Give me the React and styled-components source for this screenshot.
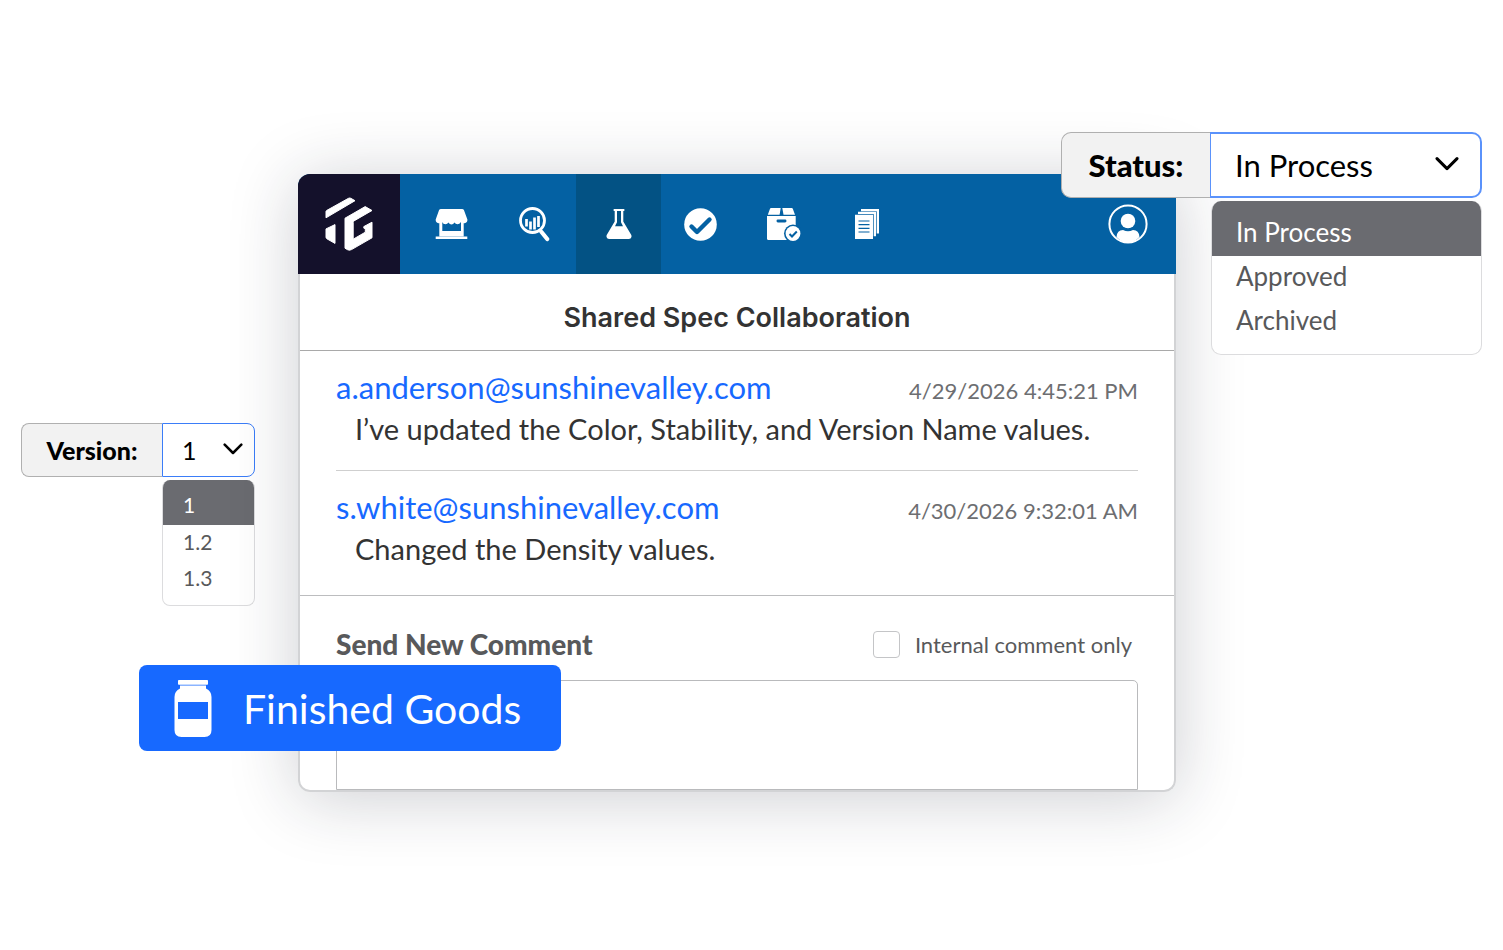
import { useState } from "react";
import styled, { createGlobalStyle } from "styled-components";

const comments = [
    {
        email: "a.anderson@sunshinevalley.com",
        date: "4/29/2026 4:45:21 PM",
        text: "I’ve updated the Color, Stability, and Version Name values.",
    },
    {
        email: "s.white@sunshinevalley.com",
        date: "4/30/2026 9:32:01 AM",
        text: "Changed the Density values.",
    },
];

const LogoIcon = () => (
    <svg width="50" height="56" viewBox="0 0 50 56" fill="#fff" stroke="#fff" strokeWidth="1" strokeLinejoin="round" aria-hidden="true">
        <path d="M2 15.600Q2 14.900 2.600 14.500L24.500 2.300Q25.700 1.700 26.800 2.300L31 4.700 2 21.800Z" />
        <path d="M2 32.900 11 28.600V47.400L2.900 42.800Q2 42.200 2 41.200Z" />
        <path d="M21 22.200 41.200 10.600 48 14.500 30 24.900Q29.200 25.500 29.200 26.500V43.200L41.300 36.200V33.500L39.800 32V30.600L48 26.200V41.800L27.500 53.600Q25.500 54.700 23.500 53.700L21 52.200Z" />
    </svg>
);

const ShopIcon = () => (
    <svg width="33" height="30" viewBox="0 0 33 30" fill="#fff" aria-hidden="true">
        <path d="M6 0H27Q28.500 0 29 1.300L32.400 10.500Q32.600 13.800 29.500 14.200 27 14.400 26 13 24.500 15.300 22.500 15.300 20.500 15.300 19.500 13.600 18.200 15.500 16.500 15.500 14.600 15.500 13.500 13.600 12.300 15.300 10.500 15.300 8.200 15.300 7 13 5.800 14.400 3.500 14.200 .5 13.800.7 10.500L4 1.300Q4.500 0 6 0Z" />
        <path fillRule="evenodd" d="M4.300 12H7.300V22H26V12H28.700V27.500H4.300Z" />
        <path d="M.7 27.500H32.300V30H.7Z" />
    </svg>
);

const AnalyzeIcon = () => (
    <svg width="31" height="35" viewBox="0 0 31 35" fill="none" stroke="#fff" aria-hidden="true">
        <circle cx="13.500" cy="13.500" r="12" strokeWidth="2.800" />
        <path d="M7.500 12V19.500M11.500 14.500V22.500M15.500 10.500V22.500M19.500 9V20" strokeWidth="2.700" />
        <path d="m20.500 22.500 1.500 2" strokeWidth="2.700" />
        <path d="m22.500 25 5.700 7" strokeWidth="4.200" strokeLinecap="round" />
    </svg>
);

const FlaskIcon = () => (
    <svg width="26" height="30" viewBox="0 0 26 30" fill="#fff" aria-hidden="true">
        <rect x="7.500" width="11" height="2" rx=".8" />
        <path fillRule="evenodd" d="M8.700 1H17.300V12.500L25.300 26Q26.300 29.500 23 30H3Q-.3 29.500.7 26L8.700 12.500ZM11 2V13.300L9 17.300H17L15 13.300V2Z" />
    </svg>
);

const ApprovedIcon = () => (
    <svg width="33" height="33" viewBox="0 0 33 33" fill="none" aria-hidden="true">
        <circle cx="16.500" cy="16.500" r="16.300" fill="#fff" />
        <path d="m7.500 18.500 5.500 5.500L25.500 11.500" stroke="#0461a3" strokeWidth="4.400" strokeLinecap="round" strokeLinejoin="round" />
    </svg>
);

const PackageIcon = () => (
    <svg width="34" height="33" viewBox="0 0 34 33" fill="#fff" aria-hidden="true">
        <path d="M4 0H13.700L12.600 6.700H.8L3 .8Q3.300 0 4 0ZM15.300 0H24.800Q25.500 0 25.800.8L28 6.700H16.500Z" />
        <path d="M0 8H28.700V32H1.500Q0 32 0 30.500Z" />
        <rect x="9.500" y="11.500" width="10" height="3" rx="1.400" fill="#0461a3" />
        <circle cx="26" cy="25.500" r="9" fill="#0461a3" />
        <circle cx="26" cy="25.500" r="7.400" />
        <path d="m22.500 26 2.500 2.500 4.800-5" fill="none" stroke="#0461a3" strokeWidth="2" />
    </svg>
);

const DocsIcon = () => (
    <svg width="24" height="30" viewBox="0 0 24 30" fill="#fff" aria-hidden="true">
        <path d="M6 0H24V24.500H21.700V2.300H6Z" />
        <path d="M3 2.800H21V27.300H18.700V5.100H3Z" />
        <path d="M0 5.800H18V30H0Z" />
        <path d="M3.500 12H14.500M3.500 15.700H14.500M3.500 19.300H14.500M3.500 23H14.500" stroke="#0461a3" strokeWidth="1.200" />
    </svg>
);

const UserIcon = () => (
    <svg width="40" height="40" viewBox="0 0 40 40" fill="#fff" aria-hidden="true">
        <circle cx="20" cy="20" r="18.600" fill="none" stroke="#fff" strokeWidth="2" />
        <circle cx="20" cy="17" r="7.300" />
        <path d="M8.500 33Q9 26 15 26Q20 28.500 25 26Q31 26 31.500 33Q26.500 38.500 20 38.500T8.500 33Z" />
    </svg>
);

const JarIcon = () => (
    <svg width="38" height="57" viewBox="0 0 38 57" fill="#fff" aria-hidden="true">
        <rect x="4" width="30" height="4.800" rx=".8" />
        <path fillRule="evenodd" d="M6 5.500H32V8.500Q37.500 11 37.500 17V50Q37.500 57 30.500 57H7.500Q.5 57 .5 50V17Q.5 11 6 8.500ZM4 22V39H34V22Z" />
    </svg>
);

const Picker = ({ id, label, options, large }) => {
    const [value, setValue] = useState(options[0]);

    return (
        <PickerWrap>
            <Field $large={large}>
                <FieldLabel htmlFor={id} $large={large}>{label}</FieldLabel>
                <SelectBox $large={large}>
                    <Select id={id} value={value} $large={large} onChange={(e) => setValue(e.target.value)}>
                        {options.map((option) => (
                            <option key={option}>{option}</option>
                        ))}
                    </Select>
                    <Chevron $large={large} viewBox="0 0 24 14" aria-hidden="true">
                        <path d="m2 2 10 10L22 2" />
                    </Chevron>
                </SelectBox>
            </Field>
            <Menu $large={large}>
                {options.map((option) => (
                    <li key={option}>
                        <MenuItem type="button" $large={large} $selected={option === value} onClick={() => setValue(option)}>
                            {option}
                        </MenuItem>
                    </li>
                ))}
            </Menu>
        </PickerWrap>
    );
};

const App = () => {
    return (
        <Page>
            <GlobalStyle />
            <Side>
                <Picker id="version" label="Version:" options={["1", "1.2", "1.3"]} />
            </Side>

            <Card>
                <Header>
                    <Logo href="#" aria-label="Home"><LogoIcon /></Logo>
                    <Nav>
                        <NavButton type="button" aria-label="Marketplace"><ShopIcon /></NavButton>
                        <NavButton type="button" aria-label="Analyze"><AnalyzeIcon /></NavButton>
                        <NavButton type="button" aria-label="Formulas" $active><FlaskIcon /></NavButton>
                        <NavButton type="button" aria-label="Approvals"><ApprovedIcon /></NavButton>
                        <NavButton type="button" aria-label="Products"><PackageIcon /></NavButton>
                        <NavButton type="button" aria-label="Documents"><DocsIcon /></NavButton>
                    </Nav>
                    <Account type="button" aria-label="Account"><UserIcon /></Account>
                </Header>

                <Body>
                    <Title>Shared Spec Collaboration</Title>
                    <Comments>
                        {comments.map((comment) => (
                            <Comment key={comment.email}>
                                <CommentMeta>
                                    <Email href={`mailto:${comment.email}`}>{comment.email}</Email>
                                    <time>{comment.date}</time>
                                </CommentMeta>
                                <p>{comment.text}</p>
                            </Comment>
                        ))}
                    </Comments>
                    <NewComment>
                        <FormHead>
                            <FormLabel htmlFor="comment">Send New Comment</FormLabel>
                            <CheckLabel>
                                <Checkbox type="checkbox" />
                                Internal comment only
                            </CheckLabel>
                        </FormHead>
                        <TextArea id="comment" />
                    </NewComment>
                </Body>

                <StatusSlot>
                    <Picker id="status" label="Status:" options={["In Process", "Approved", "Archived"]} large />
                </StatusSlot>
                <GoodsButton type="button">
                    <JarIcon />
                    Finished Goods
                </GoodsButton>
            </Card>
        </Page>
    );
};

const GlobalStyle = createGlobalStyle`
    * {
        box-sizing: border-box;
    }

    body {
        margin: 0;
        background: #fff;
        color: #333;
        font-family: Lato, "Noto Sans", sans-serif;
        overflow-x: hidden;
    }

    button, select, textarea {
        font-family: inherit;
    }
`;

const Page = styled.main`
    display: grid;
    grid-template-columns: 298px minmax(0, 1fr) 327px;
    align-items: start;
    min-height: 100vh;
    padding: 174px 0 100px;
`;

const Side = styled.aside`
    padding: 249px 43px 0 21px;
`;

const Card = styled.section`
    position: relative;
    border-radius: 12px;
    box-shadow: 0 6px 68px rgba(28, 34, 50, 0.22);
`;

const Header = styled.header`
    display: flex;
    height: 100px;
    background: #0461a3;
    border-top-left-radius: 12px;
    overflow: hidden;
`;

const Logo = styled.a`
    display: flex;
    align-items: center;
    justify-content: center;
    width: 102px;
    background: #14112b;
`;

const Nav = styled.nav`
    display: flex;
    flex: 1;
    padding-left: 10px;
`;

const NavButton = styled.button`
    display: flex;
    align-items: center;
    justify-content: center;
    width: ${(props) => (props.$active ? "85px" : "83px")};
    margin-right: ${(props) => (props.$active ? "-2px" : "0")};
    padding: 0;
    border: 0;
    background: ${(props) => (props.$active ? "#035284" : "transparent")};
    cursor: pointer;
`;

const Account = styled.button`
    display: flex;
    align-items: center;
    margin-right: 28px;
    padding: 0;
    border: 0;
    background: transparent;
    cursor: pointer;
`;

const Body = styled.div`
    border: 2px solid #d2d3d5;
    border-top: 0;
    border-radius: 0 0 12px 12px;
    background: #fff;
`;

const Title = styled.h1`
    margin: 0;
    padding: 28px 0 16px;
    border-bottom: 1px solid #a9a9a9;
    font-family: Inter, sans-serif;
    font-size: 27px;
    font-weight: 600;
    line-height: 32px;
    text-align: center;
`;

const Comments = styled.div`
    padding: 0 36px;
    border-bottom: 1px solid #bcbdbf;
`;

const Comment = styled.article`
    padding: 15px 0 20px;

    & + & {
        border-top: 1px solid #cfcfcf;
        padding-bottom: 25px;
    }

    p {
        margin: 0;
        padding-left: 19px;
        font-size: 29px;
        line-height: 42px;
    }
`;

const CommentMeta = styled.div`
    display: flex;
    align-items: baseline;
    justify-content: space-between;
    height: 42px;
    line-height: 42px;

    time {
        color: #6d6e71;
        font-size: 22px;
    }
`;

const Email = styled.a`
    color: #1769ff;
    font-size: 31px;
    text-decoration: none;
`;

const NewComment = styled.form`
    padding: 32px 36px 0;
`;

const FormHead = styled.div`
    display: flex;
    align-items: center;
    justify-content: space-between;
    height: 32px;
    margin-bottom: 20px;
    padding-right: 6px;
    color: #58595b;
`;

const FormLabel = styled.label`
    font-size: 28px;
    font-weight: 900;
`;

const CheckLabel = styled.label`
    display: flex;
    align-items: center;
    gap: 15px;
    font-size: 22px;
`;

const Checkbox = styled.input`
    appearance: none;
    width: 27px;
    height: 27px;
    margin: 0;
    border: 1px solid #c4c5c7;
    border-radius: 4px;
    background: #fff;

    &:checked {
        background: #1769ff;
    }
`;

const TextArea = styled.textarea`
    display: block;
    width: 100%;
    height: 110px;
    padding: 12px 20px;
    border: 1px solid #b9babc;
    border-radius: 5px 5px 0 0;
    outline: none;
    resize: none;
    font-size: 29px;
`;

const StatusSlot = styled.div`
    position: absolute;
    top: -42px;
    right: -306px;
    width: 421px;
`;

const GoodsButton = styled.button`
    position: absolute;
    top: 491px;
    left: -159px;
    display: flex;
    align-items: center;
    gap: 31px;
    width: 422px;
    height: 86px;
    padding: 0 0 0 35px;
    border: 0;
    border-radius: 8px;
    background: #1769ff;
    color: #fff;
    font-size: 41px;
    white-space: nowrap;
    cursor: pointer;
`;

const PickerWrap = styled.div`
    position: relative;
`;

const Field = styled.div`
    display: flex;
    height: ${(props) => (props.$large ? "66px" : "54px")};
`;

const FieldLabel = styled.label`
    display: flex;
    flex: 1;
    align-items: center;
    justify-content: center;
    border: 1px solid #b0b0b0;
    border-right: 0;
    border-radius: ${(props) => (props.$large ? "10px 0 0 10px" : "8px 0 0 8px")};
    background: #f2f2f2;
    color: #000;
    font-size: ${(props) => (props.$large ? "31px" : "25px")};
    font-weight: 900;
`;

const SelectBox = styled.div`
    position: relative;
    width: ${(props) => (props.$large ? "272px" : "93px")};
`;

const Select = styled.select`
    appearance: none;
    width: 100%;
    height: 100%;
    padding: 0 ${(props) => (props.$large ? "24px" : "19px")};
    border: ${(props) => (props.$large ? "2px solid #5a92fb" : "1px solid #3b7df8")};
    border-left-width: 1px;
    border-radius: ${(props) => (props.$large ? "0 10px 10px 0" : "0 8px 8px 0")};
    background: #fff;
    color: #000;
    font-size: ${(props) => (props.$large ? "31px" : "25px")};
`;

const Chevron = styled.svg`
    position: absolute;
    top: 50%;
    right: ${(props) => (props.$large ? "23px" : "12px")};
    width: ${(props) => (props.$large ? "24px" : "20px")};
    transform: translateY(-60%);
    fill: none;
    stroke: #000;
    stroke-width: 3;
    stroke-linecap: round;
    stroke-linejoin: round;
    pointer-events: none;
`;

const Menu = styled.ul`
    position: absolute;
    top: 100%;
    right: 0;
    width: ${(props) => (props.$large ? "271px" : "93px")};
    margin: 3px 0 0;
    padding: 0 0 ${(props) => (props.$large ? "10px" : "8px")};
    border: 1px solid #dcdcde;
    border-top: 0;
    border-radius: ${(props) => (props.$large ? "10px" : "8px")};
    background: #fff;
    list-style: none;
    overflow: hidden;
`;

const MenuItem = styled.button`
    display: block;
    width: 100%;
    height: ${(props) => (props.$large ? "44px" : "36px")};
    padding: 0 ${(props) => (props.$large ? "24px" : "20px")} 4px;
    border: 0;
    background: ${(props) => (props.$selected ? "#6a6b70" : "transparent")};
    color: ${(props) => (props.$selected ? "#fff" : "#58595b")};
    font-size: ${(props) => (props.$large ? "26px" : "21px")};
    text-align: left;
    cursor: pointer;

    li:first-child > & {
        height: ${(props) => (props.$large ? "55px" : "45px")};
        padding-top: ${(props) => (props.$large ? "6px" : "4px")};
        padding-bottom: 0;
    }
`;

export default App;
